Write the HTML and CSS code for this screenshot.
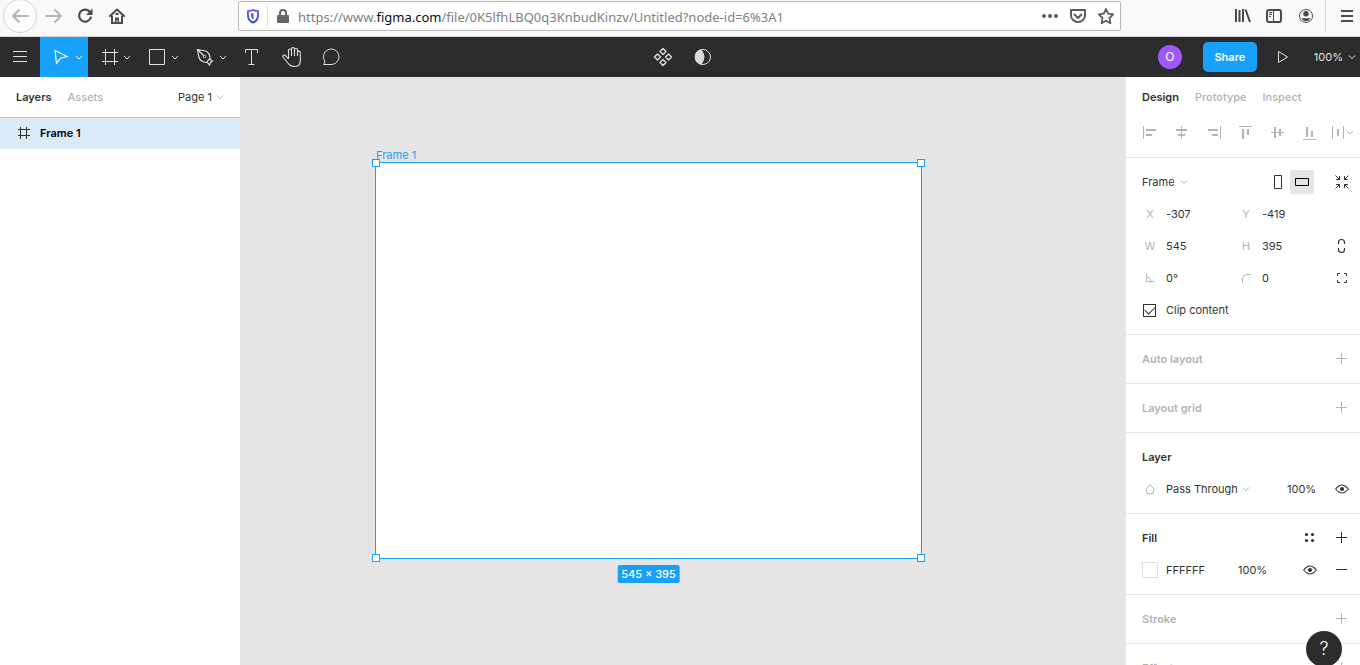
FILE: index.html
```html
<!DOCTYPE html>
<html lang="en">
<head>
<meta charset="utf-8">
<title>Untitled – Figma</title>
<link rel="stylesheet" href="styles.css">
</head>
<body>
<svg class="defs" aria-hidden="true">
  <symbol id="chev" viewBox="0 0 8 8"><path d="M1 2.5l3 3 3-3" fill="none" stroke="currentColor"/></symbol>
  <symbol id="plus" viewBox="0 0 32 32"><path d="M10 15.5h11M15.5 10v11" fill="none" stroke="currentColor"/></symbol>
  <symbol id="eye" viewBox="0 0 32 32"><path d="M9.700 16q6.300-8 12.600 0q-6.300 8-12.600 0z" fill="none" stroke="currentColor" stroke-width="1.100"/><circle cx="16" cy="16" r="2.100" fill="currentColor" stroke="none"/></symbol>
</svg>

<header class="browser">
  <nav class="browser-nav" aria-label="Browser">
    <button class="back" aria-label="Back"><svg width="32" height="32" viewBox="0 0 32 32"><path d="M24 16H9M15 10l-6 6 6 6" fill="none" stroke="#b5b5b6" stroke-width="2" stroke-linecap="round" stroke-linejoin="round"/></svg></button>
    <button aria-label="Forward"><svg width="32" height="32" viewBox="0 0 32 32"><path d="M9 16h15M18 10l6 6-6 6" fill="none" stroke="#b5b5b6" stroke-width="2" stroke-linecap="round" stroke-linejoin="round"/></svg></button>
    <button aria-label="Reload"><svg width="32" height="32" viewBox="0 0 32 32"><path d="M20.500 11.500a6 6 0 1 0 1.300 6" fill="none" stroke="#4a4a4f" stroke-width="2.200" stroke-linecap="round"/><path d="M23.500 8.500v6.500h-6.500z" fill="#4a4a4f"/></svg></button>
    <button aria-label="Home"><svg width="32" height="32" viewBox="0 0 32 32"><path d="M9 16L16 9.500 23 16" fill="none" stroke="#4a4a4f" stroke-width="2" stroke-linecap="round" stroke-linejoin="round"/><path d="M11 15.500v7.500h10v-7.500" fill="none" stroke="#4a4a4f" stroke-width="2"/><path d="M14 23v-5.500h4V23h-1.500v-3h-1v3zM14.500 13h3v2h-3z" fill="#4a4a4f"/></svg></button>
  </nav>
  <div class="url">
    <button class="shield" aria-label="Tracking protection"><svg width="14" height="16" viewBox="0 0 14 16"><defs><linearGradient id="sg" x1="0" y1="0" x2="0" y2="1"><stop offset="0" stop-color="#9059ff"/><stop offset="1" stop-color="#3051c8"/></linearGradient></defs><path d="M7 2C5 3 3 3 2 3v4c0 4 2 6.500 5 7.500 3-1 5-3.500 5-7.500V3C11 3 9 3 7 2z" fill="none" stroke="url(#sg)" stroke-width="2" stroke-linejoin="round"/><path d="M7.500 5v6.500C5.500 10.500 5 9 5 5.500z" fill="#5a4fe0"/></svg></button>
    <button class="lock" aria-label="Site information"><svg width="14" height="16" viewBox="0 0 14 16"><path d="M4 8V5a3 3 0 0 1 6 0v3" fill="none" stroke="#656565" stroke-width="2"/><rect x="1" y="7" width="12" height="8" rx="1" fill="#656565"/></svg></button>
    <p class="address">https://www.<b>figma.com</b>/file/0K5lfhLBQ0q3KnbudKinzv/Untitled?node-id=6%3A1</p>
    <div class="url-actions">
      <button aria-label="Page actions"><svg width="28" height="28" viewBox="0 0 28 28"><g fill="#5b5b5f"><circle cx="8" cy="14" r="2"/><circle cx="14" cy="14" r="2"/><circle cx="20" cy="14" r="2"/></g></svg></button>
      <button aria-label="Save to Pocket"><svg width="28" height="28" viewBox="0 0 28 28"><path d="M7 8h14v5.500a7 6.500 0 0 1-14 0z" fill="none" stroke="#5b5b5f" stroke-width="2" stroke-linejoin="round"/><path d="M10.500 12.500l3.500 3.500 3.500-3.500" fill="none" stroke="#5b5b5f" stroke-width="2" stroke-linecap="round" stroke-linejoin="round"/></svg></button>
      <button aria-label="Bookmark"><svg width="28" height="28" viewBox="0 0 28 28"><path d="M14 7l2.200 4.700 5 .7-3.700 3.600.9 5.200-4.400-2.500-4.400 2.500.9-5.200-3.700-3.600 5-.7z" fill="none" stroke="#5b5b5f" stroke-width="1.800" stroke-linejoin="round"/></svg></button>
    </div>
  </div>
  <div class="browser-tools">
    <button aria-label="Library"><svg width="32" height="32" viewBox="0 0 32 32"><path d="M10 9v13M13.500 10v12M17 9v13M19.500 9.500l4.500 12.500" fill="none" stroke="#4a4a4f" stroke-width="2"/></svg></button>
    <button aria-label="Sidebars"><svg width="32" height="32" viewBox="0 0 32 32"><rect x="9" y="10" width="14" height="12" rx="2" fill="none" stroke="#4a4a4f" stroke-width="2"/><path d="M15.500 10v12M11 12.500h3M11 14.500h3M11 16.500h2" fill="none" stroke="#4a4a4f"/></svg></button>
    <button aria-label="Account"><svg width="32" height="32" viewBox="0 0 32 32"><circle cx="16" cy="16" r="6.500" fill="none" stroke="#4a4a4f"/><circle cx="16" cy="13.800" r="2.700" fill="#4a4a4f"/><path d="M11.500 18.300h9q-1.500 3-4.500 3t-4.500-3z" fill="#4a4a4f"/></svg></button>
    <button class="app-menu" aria-label="Open menu"><svg width="34" height="32" viewBox="0 0 34 32"><path d="M15 11h12M15 16h12M15 21h12" fill="none" stroke="#4a4a4f" stroke-width="2"/></svg></button>
  </div>
</header>

<div class="toolbar">
  <div class="tools">
    <button aria-label="Main menu"><svg width="40" height="40"><path d="M13 14.500h14M13 19.500h14M13 24.500h14"/></svg></button>
    <button class="active" aria-label="Move"><svg width="48" height="40"><path d="M15 13.500l12 6-6.500 1.700-4 5z" stroke-width="1.200"/><path d="M36 19l3 3 3-3"/></svg></button>
    <button aria-label="Frame"><svg width="48" height="40"><path d="M17.500 12v16M26.500 12v16M14 15.500h16M14 24.500h16M36 19l3 3 3-3"/></svg></button>
    <button aria-label="Rectangle"><svg width="48" height="40"><path d="M13.500 12.500h15v15h-15zM36 19l3 3 3-3"/></svg></button>
    <button aria-label="Pen"><svg width="48" height="40"><path d="M13.500 12.500l8 1.500q4.500 2 4.500 7.500l-3.500 4q-6-.5-7.500-5zM13.500 12.500l6 6M26 21.500q.3 1.500 2.500 2.500l-2 1.500-1 2.500q-1-2-3-2.500" stroke-width="1.200"/><circle cx="20.500" cy="19.500" r="1.300"/><path d="M36 19l3 3 3-3"/></svg></button>
    <button aria-label="Text"><svg width="40" height="40"><path d="M13.500 16v-3.500h12V16M19.500 12.500v15M16.500 27.500h6"/></svg></button>
    <button aria-label="Hand"><svg width="40" height="40"><path d="M16.500 22v-8.500a1.500 1.500 0 0 1 3 0V19M19.500 14v-2a1.500 1.500 0 0 1 3 0v7M22.500 13a1.500 1.500 0 0 1 3 0v6M25.500 15.500a1.300 1.300 0 0 1 2.800 0V24q0 5.500-6 5.500-4 0-6-3l-5-6q-1.200-1.700.3-2.400 1.200-.5 2.200.7l2.700 3.200" stroke-width="1.100"/></svg></button>
    <button aria-label="Comment"><svg width="40" height="40"><path d="M11.500 27.500q1.700-1.500 1.200-3.500a7.800 7.800 0 1 1 7.300 3.500z"/></svg></button>
  </div>
  <div class="tools center">
    <button aria-label="Components"><svg width="40" height="40"><path d="M20 11.500l3 3-3 3-3-3zM25.500 17l3 3-3 3-3-3zM20 22.500l3 3-3 3-3-3zM14.500 17l3 3-3 3-3-3z" stroke-linejoin="round" stroke-width="1.400"/></svg></button>
    <button aria-label="Mask"><svg width="40" height="40"><circle cx="20" cy="20" r="7.500"/><path class="solid" d="M18 12.700a7.500 7.500 0 0 0 0 14.600q6-7.300 0-14.600z"/></svg></button>
  </div>
  <div class="tools end">
    <span class="avatar">O</span>
    <button class="share">Share</button>
    <button aria-label="Present"><svg width="40" height="40"><path d="M15.500 14.500v11l9-5.500z"/></svg></button>
    <button class="zoom">100% <svg class="chev"><use href="#chev"/></svg></button>
  </div>
</div>

<div class="workspace">
  <aside class="layers">
    <div class="tabs">
      <button class="tab on">Layers</button>
      <button class="tab">Assets</button>
      <button class="page">Page 1 <svg class="chev"><use href="#chev"/></svg></button>
    </div>
    <button class="layer-row">
      <svg width="16" height="16" viewBox="0 0 16 16"><path d="M4.500 2v12M10.500 2v12M2 4.500h12M2 10.500h12" fill="none" stroke="#333"/></svg>
      Frame 1
    </button>
  </aside>

  <main class="canvas">
    <div class="frame">
      <span class="frame-name">Frame 1</span>
      <i class="handle tl"></i><i class="handle tr"></i><i class="handle bl"></i><i class="handle br"></i>
      <span class="size">545 × 395</span>
    </div>
  </main>

  <aside class="props">
    <div class="tabs">
      <button class="tab on">Design</button>
      <button class="tab">Prototype</button>
      <button class="tab">Inspect</button>
    </div>
    <div class="row align">
      <button aria-label="Align left"><svg width="32" height="32"><path d="M9.500 9v13"/><path class="bar" d="M12 13h10M12 18h6"/></svg></button>
      <button aria-label="Align horizontal centers"><svg width="32" height="32"><path d="M15.500 9v13"/><path class="bar" d="M10 13h11M12 18h7"/></svg></button>
      <button aria-label="Align right"><svg width="32" height="32"><path d="M22.500 9v13"/><path class="bar" d="M10 13h10M14 18h6"/></svg></button>
      <button aria-label="Align top"><svg width="32" height="32"><path d="M9 9.500h13"/><path class="bar" d="M13 12v10M18 12v6"/></svg></button>
      <button aria-label="Align vertical centers"><svg width="32" height="32"><path d="M9 15.500h13"/><path class="bar" d="M13 10v11M18 12v7"/></svg></button>
      <button aria-label="Align bottom"><svg width="32" height="32"><path d="M9 22.500h13"/><path class="bar" d="M13 10v10M18 14v6"/></svg></button>
      <button aria-label="Distribute"><svg width="32" height="32"><path d="M6.500 9v13M17.500 9v13"/><path class="bar" d="M12 12v7"/><path d="M21 14l3 3 3-3"/></svg></button>
    </div>

    <section>
      <div class="row">
        <label class="pick c-head"><select aria-label="Frame preset" class="w-frame"><option>Frame</option></select><svg class="chev"><use href="#chev"/></svg></label>
        <button class="c5" aria-label="Portrait"><svg width="32" height="32"><path d="M12.500 9.500h7v13h-7z"/></svg></button>
        <button class="c6 chosen" aria-label="Landscape"><svg width="24" height="24"><path d="M5.500 8.500h13v7h-13z"/></svg></button>
        <button class="c7" aria-label="Resize to fit"><svg width="32" height="32"><path d="M9.500 9.500l4 4M10 13.500h3.500V10M22.500 9.500l-4 4M22 13.500h-3.500V10M9.500 22.500l4-4M10 18.500h3.500V22M22.500 22.500l-4-4M22 18.500h-3.500V22"/></svg></button>
      </div>
      <div class="row">
        <label class="c1" for="x">X</label><input class="c2" id="x" value="-307">
        <label class="c4" for="y">Y</label><input class="c5w" id="y" value="-419">
      </div>
      <div class="row">
        <label class="c1" for="w">W</label><input class="c2" id="w" value="545">
        <label class="c4" for="h">H</label><input class="c5w" id="h" value="395">
        <button class="c7" aria-label="Constrain proportions"><svg width="32" height="32"><path d="M12.500 14v-1.500a3 3 0 0 1 6 0V14M12.500 18v1.500a3 3 0 0 0 6 0V18" stroke-width="1.200"/></svg></button>
      </div>
      <div class="row">
        <label class="c1" for="rot" aria-label="Rotation"><svg width="32" height="32"><path d="M12.500 12v7.500H20M12.500 14.500q4 .5 4.500 5"/></svg></label><input class="c2" id="rot" value="0°">
        <label class="c4" for="rad" aria-label="Corner radius"><svg width="32" height="32"><path d="M12.500 21v-3q0-5.500 5.500-5.500h3"/></svg></label><input class="c5w" id="rad" value="0">
        <button class="c7" aria-label="Independent corners"><svg width="32" height="32"><path d="M11.500 14v-2.500H14M18 11.500h2.500V14M20.500 18v2.500H18M14 20.500h-2.500V18"/></svg></button>
      </div>
      <div class="row">
        <input class="c1 check" type="checkbox" id="clip" checked>
        <label class="c-rest" for="clip">Clip content</label>
      </div>
    </section>

    <section class="off"><div class="row"><h2>Auto layout</h2><button class="c7" aria-label="Add auto layout"><svg width="32" height="32"><use href="#plus"/></svg></button></div></section>
    <section class="off"><div class="row"><h2>Layout grid</h2><button class="c7" aria-label="Add layout grid"><svg width="32" height="32"><use href="#plus"/></svg></button></div></section>
    <section>
      <div class="row"><h2>Layer</h2></div>
      <div class="row">
        <span class="c1"><svg width="32" height="32"><path d="M16 11.500q4 4 4 6a4 3.500 0 0 1-8 0q0-2 4-6z"/></svg></span>
        <label class="pick c-rest"><select aria-label="Blend mode" class="w-blend"><option>Pass Through</option></select><svg class="chev"><use href="#chev"/></svg></label>
        <input class="c-op" aria-label="Layer opacity" value="100%">
        <button class="c7" aria-label="Toggle layer"><svg width="32" height="32"><use href="#eye"/></svg></button>
      </div>
    </section>
    <section>
      <div class="row"><h2>Fill</h2>
        <button class="c6" aria-label="Styles"><svg width="32" height="32"><g class="dots"><circle cx="12.500" cy="12.500" r="1.600"/><circle cx="18.500" cy="12.500" r="1.600"/><circle cx="12.500" cy="18.500" r="1.600"/><circle cx="18.500" cy="18.500" r="1.600"/></g></svg></button>
        <button class="c7" aria-label="Add fill"><svg width="32" height="32"><use href="#plus"/></svg></button></div>
      <div class="row">
        <button class="c1 swatch" aria-label="Fill colour"></button>
        <input class="c2" aria-label="Hex" value="FFFFFF">
        <input class="c-fop" aria-label="Fill opacity" value="100%">
        <button class="c6" aria-label="Toggle fill"><svg width="32" height="32"><use href="#eye"/></svg></button>
        <button class="c7" aria-label="Remove fill"><svg width="32" height="32"><path d="M10 15.500h11"/></svg></button>
      </div>
    </section>
    <section class="off"><div class="row"><h2>Stroke</h2><button class="c7" aria-label="Add stroke"><svg width="32" height="32"><use href="#plus"/></svg></button></div></section>
    <section class="off"><div class="row"><h2>Effects</h2><button class="c7" aria-label="Add effect"><svg width="32" height="32"><use href="#plus"/></svg></button></div></section>
  </aside>
</div>
<button class="help" aria-label="Help">?</button>
</body>
</html>
```
FILE: styles.css
```css
* { box-sizing: border-box; }
body {
  margin: 0;
  height: 100vh;
  display: flex;
  flex-direction: column;
  overflow: hidden;
  font: 11px/16px Inter, "Liberation Sans", sans-serif;
  color: #333;
  background: #fff;
}
button, input, select { font: inherit; color: inherit; border: 0; padding: 0; margin: 0; background: none; }
button svg, label svg, span svg { display: block; }
.defs { display: none; }
.chev { width: 8px; height: 8px; flex: none; }

/* Browser chrome */
.browser {
  flex: none;
  height: 37px;
  display: flex;
  align-items: flex-start;
  background: #f9f9fa;
  border-bottom: 1px solid #d2d2d4;
}
.browser-nav { width: 238px; display: flex; align-items: flex-start; padding-left: 3px; }
.back { margin-top: -1px; border: 1px solid #d0d0d1; border-radius: 50%; background: #fcfcfc; }
.url {
  flex: 1;
  height: 30px;
  margin-top: 1px;
  display: flex;
  align-items: center;
  background: #fff;
  border: 1px solid #b8b8b9;
  border-radius: 2px;
}
.shield { padding: 0 7px; border-right: 1px solid #ddd; height: 22px; }
.lock { padding: 0 8px; }
.address {
  flex: 1;
  margin: 0;
  padding-top: 2px;
  font: 13px/20px "Noto Sans", "Open Sans", sans-serif;
  color: #808080;
  white-space: nowrap;
}
.address b { font-weight: 400; color: #0c0c0d; }
.url-actions { display: flex; }
.browser-tools { width: 239px; display: flex; justify-content: flex-end; }
.app-menu { border-left: 1px solid #d7d7d8; margin-left: 3px; }

/* Editor toolbar */
.toolbar {
  flex: none;
  height: 40px;
  display: grid;
  grid-template-columns: 1fr auto 1fr;
  background: #2c2c2c;
  color: #e0e0e0;
}
.tools { display: flex; align-items: center; }
.tools svg { fill: none; stroke: currentColor; }
.tools .solid { fill: #d9d9d9; }
.tools .active { background: #18a0fb; color: #fff; }
.center { padding-left: 6px; }
.end { justify-content: flex-end; }
.avatar {
  width: 24px;
  height: 24px;
  margin-right: 21px;
  border-radius: 50%;
  background: #9f57ff;
  color: #fff;
  font-size: 12px;
  line-height: 24px;
  text-align: center;
}
.share {
  width: 54px;
  height: 30px;
  margin-right: 6px;
  border-radius: 5px;
  background: #18a0fb;
  color: #fff;
  font-weight: 600;
}
.zoom { display: flex; align-items: center; gap: 5px; padding: 0 4px 0 11px; }

/* Workspace */
.workspace { flex: 1; min-height: 0; display: flex; }
.tabs { height: 40px; display: flex; align-items: center; gap: 16px; padding: 0 16px; }
.tab { color: #b3b3b3; font-weight: 500; }
.tab.on { color: #333; font-weight: 600; }
.layers { flex: none; width: 240px; }
.page { display: flex; align-items: center; gap: 4px; margin-left: auto; }
.page .chev, .pick .chev { color: #b3b3b3; }
.layer-row {
  width: 100%;
  height: 32px;
  display: flex;
  align-items: center;
  gap: 8px;
  padding: 0 16px 1px;
  background: #daebf7;
  border-top: 1px solid #b9d0e0;
  color: #000;
  font-weight: 600;
}
.canvas { flex: 1; position: relative; overflow: hidden; background: #e5e5e5; }
.frame {
  position: absolute;
  left: 135px;
  top: 85px;
  width: 547px;
  height: 397px;
  background: #fff;
  border: 1px solid #18a0fb;
}
.frame-name { position: absolute; left: 0; top: -16px; color: #18a0fb; }
.handle { position: absolute; width: 8px; height: 8px; background: #fff; border: 1px solid #18a0fb; }
.tl, .tr { top: -4px; }
.bl, .br { bottom: -4px; }
.tl, .bl { left: -4px; }
.tr, .br { right: -4px; }
.size {
  position: absolute;
  top: 402px;
  left: 50%;
  transform: translateX(-50%);
  padding: 0 4px;
  line-height: 18px;
  border-radius: 2px;
  background: #18a0fb;
  color: #fff;
  font-weight: 500;
  white-space: nowrap;
}

/* Properties */
.props { flex: none; width: 234px; overflow: hidden; background: #fff; }
.row {
  display: grid;
  grid-template-columns: repeat(7, 32px);
  grid-template-rows: 32px;
  align-items: center;
  padding-left: 8px;
}
.row > * { grid-row: 1; min-width: 0; }
.row svg { fill: none; stroke: currentColor; }
.align { height: 40px; align-content: start; color: #b3b3b3; }
.row .bar { stroke-width: 2; }
section { padding: 8px 0; border-top: 1px solid #e5e5e5; }
.c1 { grid-column: 1; }
.c2 { grid-column: 2 / 4; width: 56px; }
.c4 { grid-column: 4; }
.c5 { grid-column: 5; }
.c5w { grid-column: 5 / 7; width: 56px; }
.c6 { grid-column: 6; }
.c7 { grid-column: 7; }
.c-head { grid-column: 1 / 4; padding-left: 8px; }
.c-rest { grid-column: 2 / 6; }
.c-op { grid-column: 5 / 7; margin-left: 25px; }
.c-fop { grid-column: 4 / 6; margin-left: 8px; }
label.c1, label.c4, span.c1 { color: #b3b3b3; text-align: center; }
.chosen { width: 24px; height: 24px; margin-left: -4px; background: #e5e5e5; border-radius: 2px; color: #000; }
.pick { display: flex; align-items: center; gap: 4px; }
.pick select { appearance: none; }
.w-frame { width: 34px; }
.w-blend { width: 72px; }
h2 { grid-column: 1 / 6; margin: 0; padding-left: 8px; font-size: 11px; font-weight: 600; }
.off { color: #b3b3b3; }
.dots { fill: currentColor; stroke: none; }
.swatch { width: 16px; height: 16px; margin-left: 8px; border: 1px solid #e0e0e0; background: #fff; }
.check {
  appearance: none;
  width: 13px;
  height: 13px;
  margin-left: 9px;
  border: 1px solid #333;
  display: grid;
  place-items: center;
}
.check:checked::before {
  content: "";
  width: 9px;
  height: 5px;
  border: solid #333;
  border-width: 0 0 1px 1px;
  transform: translateY(-1px) rotate(-45deg);
}
.help {
  position: fixed;
  right: 18px;
  bottom: -2px;
  width: 36px;
  height: 36px;
  border-radius: 50%;
  background: #2c2c2c;
  color: #fff;
  font-size: 18px;
  font-weight: 300;
}
```
